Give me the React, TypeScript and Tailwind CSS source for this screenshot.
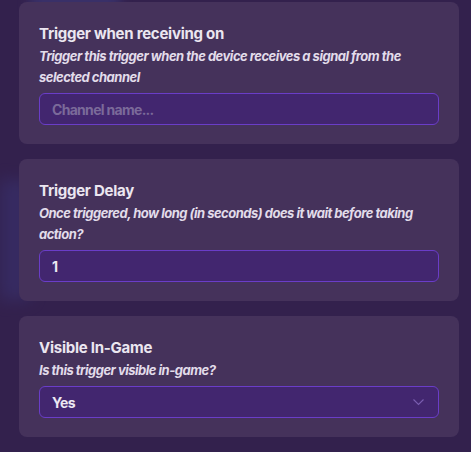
import React from "react";

function Card({ title, desc, children }: { title: string; desc: React.ReactNode; children: React.ReactNode }) {
  return (
    <div className="w-[440px] rounded-[8px] bg-[#45325b] px-[20px] pt-[20px] pb-[19px]">
      <div className="text-[15px] leading-[24px] font-bold tracking-[-0.25px] text-[#ebe6f0]">{title}</div>
      <div className="text-[13px] leading-[21px] italic font-bold tracking-[-0.5px] text-[#e2dcea] whitespace-nowrap">{desc}</div>
      <div className="mt-[5px]">{children}</div>
    </div>
  );
}

export default function App() {
  return (
    <div
      className="w-[471px] h-[452px] overflow-hidden bg-[#33214d] relative"
      style={{ fontFamily: "Inter, 'Noto Sans', sans-serif" }}
    >
      <div className="absolute left-[30px] top-[-20px] w-[90px] h-[40px] rounded-[8px] bg-[#3d3a7a] opacity-60 blur-[6px]" />
      <div className="absolute left-[0px] top-[180px] w-[30px] h-[120px] bg-[#3a3577] opacity-50 blur-[8px]" />
      <div className="relative flex flex-col gap-[15px] pt-[2px] pl-[19px]">
        <Card
          title="Trigger when receiving on"
          desc={<>Trigger this trigger when the device receives a signal from the<br />selected channel</>}
        >
          <div className="h-[32px] rounded-[6px] border border-[#6a3dc8] bg-[#42266f] px-[12px] flex items-center text-[14px] tracking-[-0.7px] font-bold text-[#7b6a9a]">
            Channel name...
          </div>
        </Card>
        <Card
          title="Trigger Delay"
          desc={<>Once triggered, how long (in seconds) does it wait before taking<br />action?</>}
        >
          <div className="h-[32px] rounded-[6px] border border-[#6a3dc8] bg-[#42266f] px-[12px] flex items-center text-[14px] tracking-[-0.6px] font-bold text-[#ece8f2]">
            1
          </div>
        </Card>
        <Card title="Visible In-Game" desc="Is this trigger visible in-game?">
          <div className="h-[32px] rounded-[6px] border border-[#6a3dc8] bg-[#42266f] pl-[12px] pr-[14px] flex items-center justify-between text-[14px] tracking-[-0.6px] font-bold text-[#ece8f2]">
            <span>Yes</span>
            <svg width="11" height="7" viewBox="0 0 11 7" fill="none">
              <path d="M0.5 0.5 L5.5 5.5 L10.5 0.5" stroke="#7a5eb0" strokeWidth="1.1" />
            </svg>
          </div>
        </Card>
      </div>
    </div>
  );
}
